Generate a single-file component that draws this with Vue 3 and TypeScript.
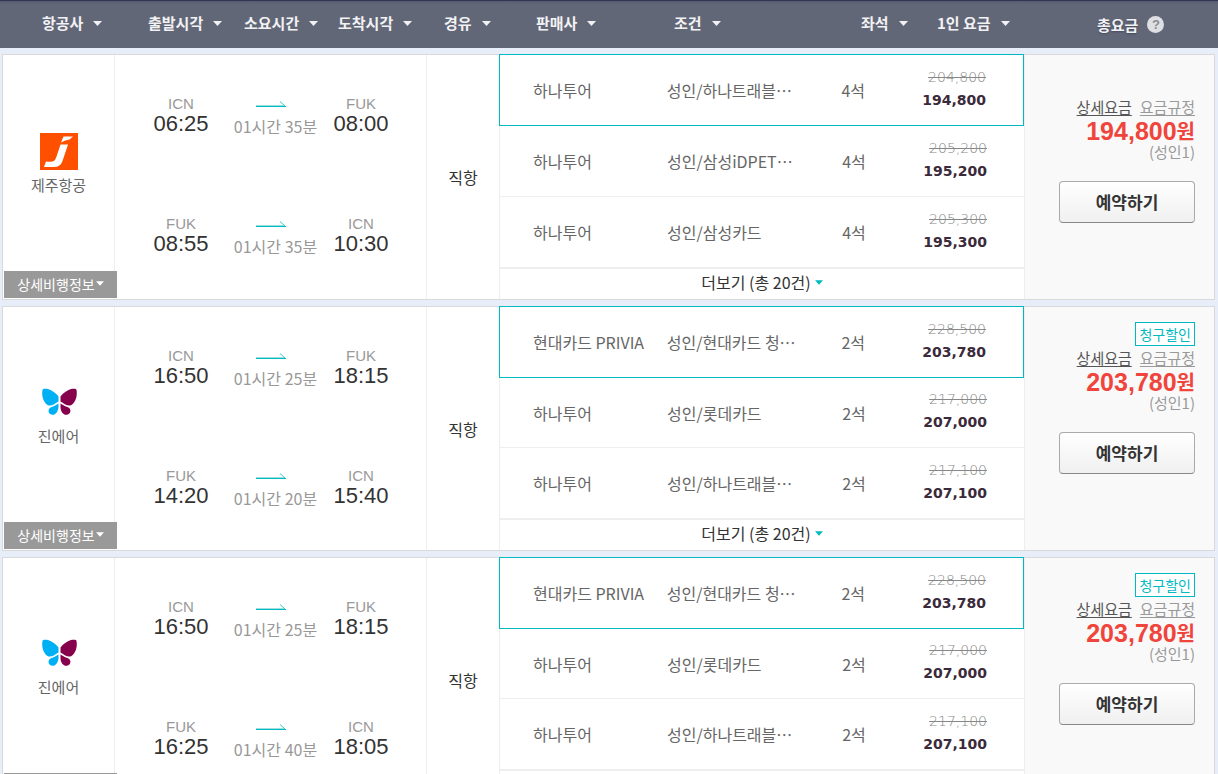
<script setup lang="ts">
interface Leg {
  from: string
  depart: string
  duration: string
  to: string
  arrive: string
}
interface Offer {
  seller: string
  condition: string
  truncated: boolean
  seats: string
  listPrice: string
  price: string
}
interface Flight {
  id: number
  airline: 'jeju' | 'jin'
  name: string
  discount: boolean
  legs: Leg[]
  offers: Offer[]
  total: string
}

const sortKeys: string[] = [
  '항공사', '출발시각', '소요시간', '도착시각', '경유', '판매사', '조건', '좌석', '1인 요금',
]

const jinOffers: Offer[] = [
  { seller: '현대카드 PRIVIA', condition: '성인/현대카드 청', truncated: true, seats: '2석', listPrice: '228,500', price: '203,780' },
  { seller: '하나투어', condition: '성인/롯데카드', truncated: false, seats: '2석', listPrice: '217,000', price: '207,000' },
  { seller: '하나투어', condition: '성인/하나트래블', truncated: true, seats: '2석', listPrice: '217,100', price: '207,100' },
]

const flights: Flight[] = [
  {
    id: 1,
    airline: 'jeju',
    name: '제주항공',
    discount: false,
    legs: [
      { from: 'ICN', depart: '06:25', duration: '01시간 35분', to: 'FUK', arrive: '08:00' },
      { from: 'FUK', depart: '08:55', duration: '01시간 35분', to: 'ICN', arrive: '10:30' },
    ],
    offers: [
      { seller: '하나투어', condition: '성인/하나트래블', truncated: true, seats: '4석', listPrice: '204,800', price: '194,800' },
      { seller: '하나투어', condition: '성인/삼성iDPET', truncated: true, seats: '4석', listPrice: '205,200', price: '195,200' },
      { seller: '하나투어', condition: '성인/삼성카드', truncated: false, seats: '4석', listPrice: '205,300', price: '195,300' },
    ],
    total: '194,800',
  },
  {
    id: 2,
    airline: 'jin',
    name: '진에어',
    discount: true,
    legs: [
      { from: 'ICN', depart: '16:50', duration: '01시간 25분', to: 'FUK', arrive: '18:15' },
      { from: 'FUK', depart: '14:20', duration: '01시간 20분', to: 'ICN', arrive: '15:40' },
    ],
    offers: jinOffers,
    total: '203,780',
  },
  {
    id: 3,
    airline: 'jin',
    name: '진에어',
    discount: true,
    legs: [
      { from: 'ICN', depart: '16:50', duration: '01시간 25분', to: 'FUK', arrive: '18:15' },
      { from: 'FUK', depart: '16:25', duration: '01시간 40분', to: 'ICN', arrive: '18:05' },
    ],
    offers: jinOffers,
    total: '203,780',
  },
]
</script>

<template>
  <div class="page">
    <header class="sortbar">
      <button v-for="key in sortKeys" :key="key" type="button" class="sort">
        {{ key }}
        <svg class="caret" viewBox="0 0 9 5" aria-hidden="true"><path d="M0 0h9L4.5 5z" /></svg>
      </button>
      <div class="sort-total">
        총요금
        <button type="button" class="help" aria-label="총요금 도움말">?</button>
      </div>
    </header>

    <main class="results">
      <article v-for="flight in flights" :key="flight.id" class="card" :class="{ discounted: flight.discount }">
        <section class="airline">
          <svg v-if="flight.airline === 'jeju'" class="logo" viewBox="0 0 38 38" aria-hidden="true">
            <rect width="38" height="37" fill="#ff5000" />
            <path d="M23.500 3.500H33L29.500 6.500Q25.500 7 21 9.500Z" fill="#fff" />
            <path d="M20.500 11.500H28L22.500 28Q20.500 34 14 34H4L6 28.500Q12.500 29.500 14.500 27.500Q15.500 26.500 16.500 23.500Z" fill="#fff" />
          </svg>
          <svg v-else class="logo" viewBox="0 0 38 38" aria-hidden="true">
            <path d="M2.500 6C2.500 4.500 5.500 4.500 8 5C12 6.500 16 9 18.500 12.500V17.500C15 19.500 11 23 7.500 21C3 18 1.500 11 2.500 6Z" fill="#00b0f5" />
            <path d="M36.500 6C36.500 4.500 33.500 4.500 31 5C27 6.500 23 9 20.500 12.500V17.500C24 19.500 28 23 31.500 21C36 18 37.500 11 36.500 6Z" fill="#87004c" />
            <path d="M18.500 19.500V23.500C18 28 15 31.500 12 30.700C8 30 7.500 25.500 10.500 23.500Q14 22.500 18.500 19.500Z" fill="#00b0f5" />
            <path d="M20.500 19.500V23.500C20.500 28 24 31.500 27 30.700C31 30 31.500 25.500 28.500 23.500Q25 22.500 20.500 19.500Z" fill="#87004c" />
          </svg>
          <span class="airline-name">{{ flight.name }}</span>
          <button type="button" class="detail">
            상세비행정보<svg class="caret" viewBox="0 0 9 5" aria-hidden="true"><path d="M0 0h9L4.500 5z" /></svg>
          </button>
        </section>

        <section class="schedule">
          <div v-for="(leg, i) in flight.legs" :key="i" class="leg">
            <div class="stop">
              <span class="code">{{ leg.from }}</span>
              <span class="time">{{ leg.depart }}</span>
            </div>
            <div class="span">
              <svg class="arrow" viewBox="0 0 30 6" aria-hidden="true">
                <path d="M0 4.500H28" stroke="#9fe0e3" />
                <path d="M24 0.500L29 5" stroke="#3cc8cd" fill="none" />
                <path d="M0 5.500H30" stroke="#00b9c1" />
              </svg>
              <span class="duration">{{ leg.duration }}</span>
            </div>
            <div class="stop">
              <span class="code">{{ leg.to }}</span>
              <span class="time">{{ leg.arrive }}</span>
            </div>
          </div>
        </section>

        <section class="via">직항</section>

        <section class="offers">
          <table class="offer-table">
            <tbody>
              <tr v-for="(offer, i) in flight.offers" :key="i" :class="{ selected: i === 0 }">
                <td>{{ offer.seller }}</td>
                <td>{{ offer.condition }}<span v-if="offer.truncated">⋯</span></td>
                <td class="seats">{{ offer.seats }}</td>
                <td class="prices">
                  <s>{{ offer.listPrice }}</s>
                  <strong>{{ offer.price }}</strong>
                </td>
              </tr>
            </tbody>
          </table>
          <button type="button" class="more">
            더보기 (총 20건)
            <svg class="caret" viewBox="0 0 9 5" aria-hidden="true"><path d="M0 0h9L4.500 5z" /></svg>
          </button>
        </section>

        <section class="fare">
          <div class="badge-slot"><span v-if="flight.discount" class="badge">청구할인</span></div>
          <div class="links">
            <a href="#" class="strong-link">상세요금</a>
            <a href="#">요금규정</a>
          </div>
          <div class="total">{{ flight.total }}<span class="won">원</span></div>
          <div class="pax">(성인1)</div>
          <button type="button" class="book">예약하기</button>
        </section>
      </article>
    </main>
  </div>
</template>

<style>
body {
  margin: 0;
  background: #e8eef9;
}
</style>

<style scoped>
.page {
  height: 100vh;
  overflow: hidden;
  background: #e8eef9;
  color: #666;
  font-family: "Noto Sans CJK KR", sans-serif;
  font-size: 16px;
  line-height: 20px;
}
.page * {
  box-sizing: border-box;
}
button {
  margin: 0;
  padding: 0;
  border: 0;
  background: none;
  color: inherit;
  font: inherit;
  cursor: pointer;
}
.caret {
  width: 9px;
  height: 5px;
  fill: currentColor;
}
.sortbar {
  display: grid;
  grid-template-columns: 106fr 96fr 94fr 106fr 92fr 138fr 187fr 76fr 160fr 121fr;
  align-items: center;
  height: 48px;
  padding-left: 42px;
  border-top: 1px solid #2e3654;
  background: linear-gradient(#575c70, #626778 4px);
  color: #f2f2f4;
  font-size: 15px;
  font-weight: 700;
  text-shadow: 0 1px 2px #44485a;
}
.sort {
  display: flex;
  align-items: center;
  gap: 10px;
  padding-bottom: 3px;
  white-space: nowrap;
}
.sort-total {
  display: flex;
  align-items: center;
  gap: 9px;
  white-space: nowrap;
}
.help {
  width: 17px;
  height: 17px;
  border-radius: 50%;
  background: #dedfe2;
  color: #8a8c95;
  font: 700 13px/17px "Liberation Sans", sans-serif;
  text-shadow: none;
}
.results {
  display: flex;
  flex-direction: column;
  gap: 6px;
  padding: 6px 3px 6px 2px;
}
.card {
  display: grid;
  grid-template-columns: 112fr 312fr 72fr 525fr 190fr;
  flex-shrink: 0;
  min-height: 246px;
  border: 1px solid #d9d9d9;
  background: #fff;
}
.discounted {
  min-height: 245px;
}
.airline {
  position: relative;
  display: flex;
  flex-direction: column;
  align-items: center;
  justify-content: center;
  gap: 4px;
  padding-bottom: 27px;
  border-right: 1px solid #eee;
}
.logo {
  width: 38px;
  height: 38px;
}
.airline-name {
  font-size: 15px;
}
.detail {
  position: absolute;
  left: 1px;
  right: -3px;
  bottom: 1px;
  display: flex;
  align-items: center;
  justify-content: center;
  gap: 1px;
  height: 27px;
  padding-bottom: 2px;
  background: #999;
  color: #fff;
  font-size: 14px;
  white-space: nowrap;
}
.detail .caret,
.more .caret {
  width: 8px;
}
.schedule {
  display: flex;
  flex-direction: column;
  justify-content: center;
  gap: 79px;
  padding: 0 34px 3px 26px;
  border-right: 1px solid #eee;
}
.leg {
  display: grid;
  grid-template-columns: 80fr 109fr 62fr;
  font-family: "Liberation Sans", sans-serif;
}
.stop,
.span {
  display: flex;
  flex-direction: column;
  align-items: center;
}
.code {
  color: #999;
  font-size: 15px;
  line-height: 18px;
}
.time {
  color: #333;
  font-size: 22px;
  line-height: 22px;
}
.span {
  padding-top: 6px;
}
.arrow {
  width: 30px;
  height: 6px;
  margin-right: 9px;
}
.duration {
  margin-top: 9px;
  color: #999;
  font-family: "Noto Sans CJK KR", sans-serif;
  white-space: nowrap;
}
.via {
  display: flex;
  align-items: center;
  justify-content: center;
  color: #333;
}
.offers {
  display: grid;
  grid-template-rows: 1fr 30px;
}
.offer-table,
.offer-table tbody {
  display: grid;
}
.offer-table tbody {
  grid-template-rows: 71px 1fr 72px;
}
tr {
  display: grid;
  grid-template-columns: 134fr 143fr 88fr 89fr;
  padding: 0 37px 0 33px;
  border-left: 1px solid #eee;
  border-bottom: 1px solid #eee;
}
tr:last-child {
  border-bottom-width: 2px;
}
tr.selected {
  margin-top: -1px;
  border: 1px solid #00b9c1;
}
td {
  display: flex;
  align-items: center;
  padding: 0;
  white-space: nowrap;
}
td.seats {
  justify-content: center;
}
td.prices {
  flex-direction: column;
  align-items: flex-end;
  justify-content: center;
  padding-bottom: 3px;
  font-family: "DejaVu Sans", sans-serif;
  font-size: 14px;
  line-height: 23px;
}
s {
  color: #888;
  font-weight: 200;
}
strong {
  color: #3b2a3a;
}
.more {
  display: flex;
  align-items: center;
  justify-content: center;
  gap: 4px;
  padding-bottom: 4px;
  border-left: 1px solid #eee;
  color: #333;
}
.more .caret {
  fill: #00b9c1;
}
.fare {
  display: flex;
  flex-direction: column;
  align-items: flex-end;
  padding: 15px 19px 0 0;
  border-left: 1px solid #eee;
  background: #f9f9f9;
}
.badge-slot {
  height: 26px;
}
.discounted .badge-slot {
  height: 25px;
}
.badge {
  display: block;
  padding: 0 3px;
  border: 1px solid #00b9c1;
  background: #fff;
  color: #00b9c1;
  font-size: 14px;
  line-height: 22px;
}
.links {
  display: flex;
  gap: 8px;
  padding-bottom: 2px;
  font-size: 15px;
  line-height: 22px;
}
.links a {
  color: #999;
  text-underline-offset: 2px;
}
.links .strong-link {
  color: #555;
}
.total {
  display: flex;
  align-items: center;
  height: 22px;
  color: #f0453c;
  font: 700 25px/22px "Liberation Sans", sans-serif;
}
.won {
  font: 700 20px/22px "Noto Sans CJK KR", sans-serif;
}
.pax {
  color: #999;
  font-size: 15px;
}
.book {
  width: 136px;
  height: 42px;
  margin-top: 19px;
  border: 1px solid #aaa;
  border-bottom-color: #888;
  border-radius: 4px;
  background: linear-gradient(#fff, #f0f0f0);
  color: #333;
  font-size: 17px;
  font-weight: 700;
}
</style>
